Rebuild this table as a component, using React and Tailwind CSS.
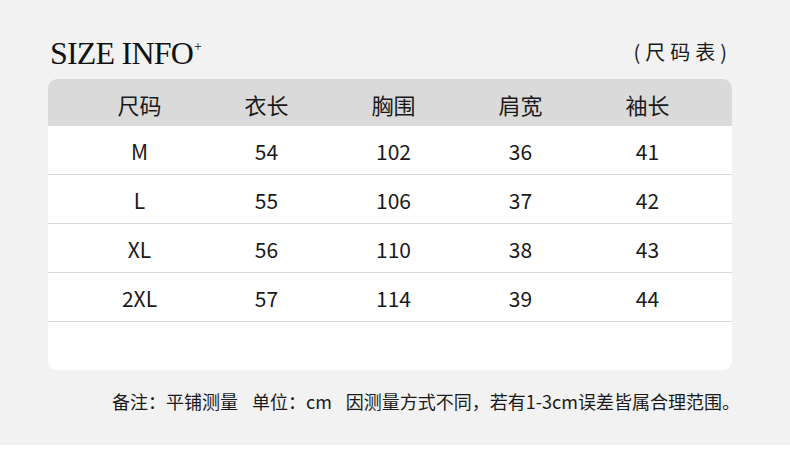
import React from 'react';

const cjk = { fontFamily: '"Noto Sans CJK SC", "Noto Sans", sans-serif' };

const headers = ['尺码', '衣长', '胸围', '肩宽', '袖长'];
const rows = [
    ['M', '54', '102', '36', '41'],
    ['L', '55', '106', '37', '42'],
    ['XL', '56', '110', '38', '43'],
    ['2XL', '57', '114', '39', '44'],
];

const App = () => {
    return (
        <div className="w-[790px] h-[462px] bg-white overflow-hidden" style={cjk}>
            <div className="h-[445px] bg-[#f2f2f2] pl-[48px] pr-[58px] pt-[37px]">
                {/* Title */}
                <div className="h-[42px] flex justify-between items-start">
                    <div
                        className="ml-[2px] text-[32px] leading-none tracking-[-0.8px] text-[#111] flex items-start"
                        style={{ fontFamily: '"Liberation Serif", serif' }}
                    >
                        <span>SIZE INFO</span>
                        <span className="text-[14px] leading-none ml-[1px] mt-[3px]">+</span>
                    </div>
                    <div className="mt-[3px] text-[20px] leading-[24px] tracking-[5px] text-[#1a1a1a]">(尺码表)</div>
                </div>

                {/* Table */}
                <div className="h-[291px] bg-white rounded-[9px] overflow-hidden">
                    <div className="h-[47px] bg-[#dbdadb] pl-[28px] grid grid-cols-[repeat(5,127px)] items-center">
                        {headers.map((h) => (
                            <div key={h} className="text-center text-[22px] text-[#1a1a1a] leading-none pt-[2px]">{h}</div>
                        ))}
                    </div>
                    {rows.map((r) => (
                        <div key={r[0]} className="h-[49px] border-b border-[#d9d9d9] pl-[28px] grid grid-cols-[repeat(5,127px)] items-center">
                            {r.map((c, i) => (
                                <div key={i} className="text-center text-[21px] text-[#1a1a1a] leading-none pt-[3px]">{c}</div>
                            ))}
                        </div>
                    ))}
                </div>

                {/* Note */}
                <div className="mt-[19px] pl-[64px] flex text-[18px] leading-[24px] text-[#1a1a1a] whitespace-nowrap">
                    <span>备注：平铺测量</span>
                    <span className="ml-[14px]">单位：cm</span>
                    <span className="ml-[14px]">因测量方式不同，若有1-3cm误差皆属合理范围。</span>
                </div>
            </div>
        </div>
    );
};

export default App;
